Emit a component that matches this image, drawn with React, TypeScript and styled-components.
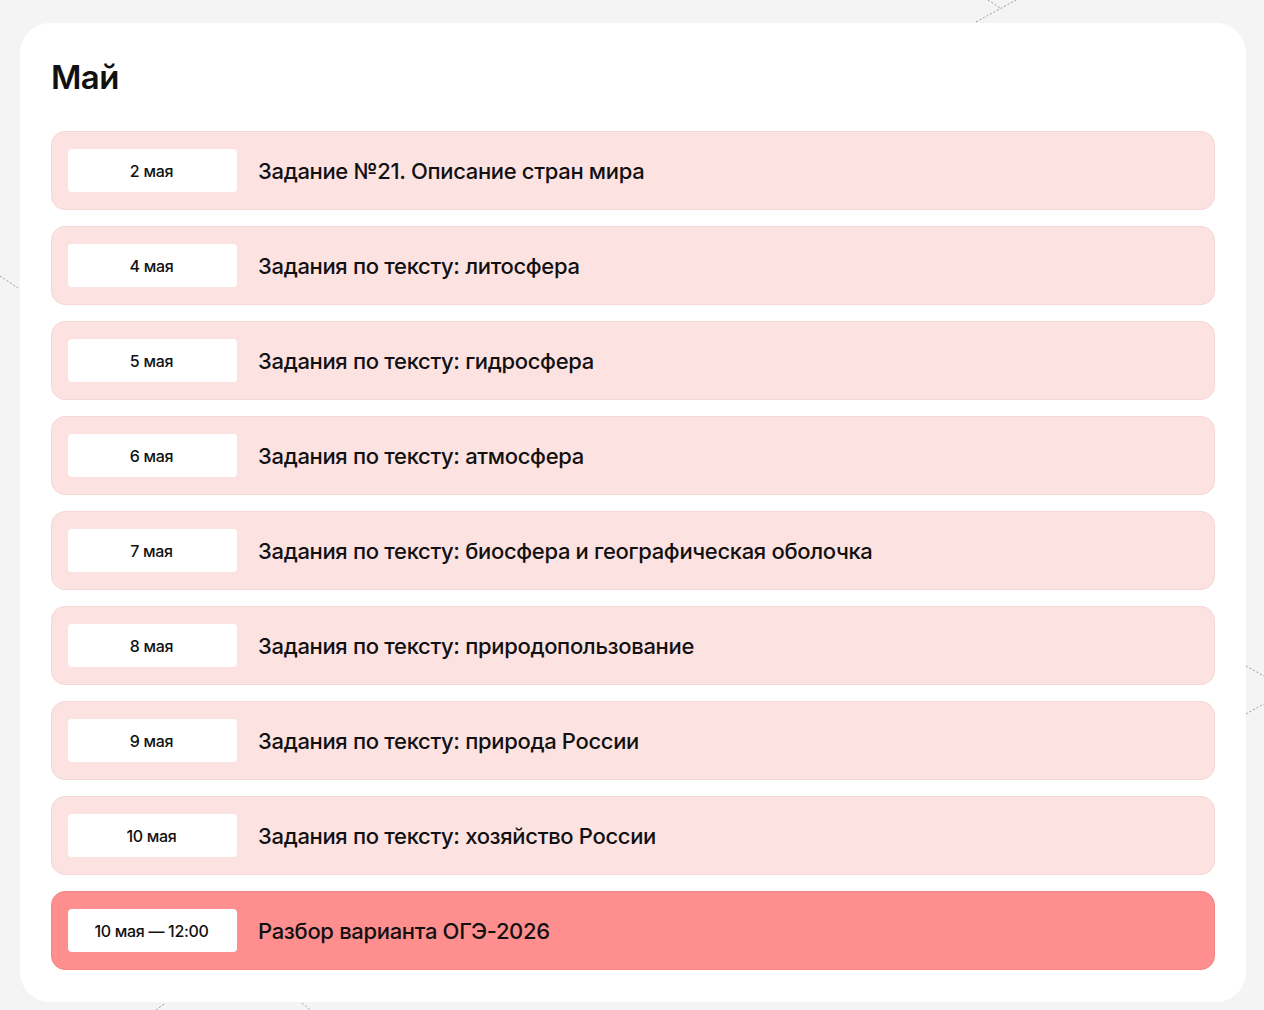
import React from "react";
import styled, { createGlobalStyle } from "styled-components";

const Global = createGlobalStyle`
  html, body { margin: 0; padding: 0; background: #f4f4f4; }
  body { font-family: Inter, "Noto Sans", sans-serif; color: #111; }
  * { box-sizing: border-box; }
`;

const Page = styled.div`
  position: relative;
  min-height: 1010px;
  padding: 23px 18px 7px 20px;
  overflow: hidden;
`;

const Card = styled.section`
  position: relative;
  background: #fff;
  border-radius: 30px;
  padding: 32px 31px 32px 31px;
  display: flex;
  flex-direction: column;
  gap: 32px;
`;

const Title = styled.h2`
  margin: 0;
  font-size: 33px;
  line-height: 44px;
  font-weight: 600;
  letter-spacing: -0.6px;
  color: #111;
`;

const List = styled.div`
  display: flex;
  flex-direction: column;
  gap: 16px;
`;

const Row = styled.div<{ $accent?: boolean }>`
  display: flex;
  align-items: center;
  gap: 21px;
  height: 79px;
  padding: 0 16px;
  border-radius: 14px;
  background: ${(p) => (p.$accent ? "#ff8e8e" : "#fde2e2")};
  border: 1px solid ${(p) => (p.$accent ? "#f48585" : "#f7d6d6")};
`;

const DatePill = styled.div`
  flex: 0 0 169px;
  height: 43px;
  background: #fff;
  border-radius: 4px;
  display: flex;
  align-items: center;
  justify-content: center;
  font-size: 16px;
  font-weight: 500;
  letter-spacing: -0.3px;
  color: #111;
  padding-right: 2px;
`;

const RowTitle = styled.div`
  font-size: 22px;
  font-weight: 500;
  letter-spacing: -0.33px;
  color: #111;
`;

const Deco = styled.svg`
  position: absolute;
  pointer-events: none;
`;

const items: { date: string; title: string; accent?: boolean }[] = [
  { date: "2 мая", title: "Задание №21. Описание стран мира" },
  { date: "4 мая", title: "Задания по тексту: литосфера" },
  { date: "5 мая", title: "Задания по тексту: гидросфера" },
  { date: "6 мая", title: "Задания по тексту: атмосфера" },
  { date: "7 мая", title: "Задания по тексту: биосфера и географическая оболочка" },
  { date: "8 мая", title: "Задания по тексту: природопользование" },
  { date: "9 мая", title: "Задания по тексту: природа России" },
  { date: "10 мая", title: "Задания по тексту: хозяйство России" },
  { date: "10 мая — 12:00", title: "Разбор варианта ОГЭ-2026", accent: true },
];

export default function App() {
  return (
    <>
      <Global />
      <Page>
        <Deco style={{ left: 970, top: 0 }} width="50" height="24" viewBox="0 0 50 24">
          <path d="M6 22 L46 0 M18 0 L30 8" stroke="#999" strokeWidth="1" strokeDasharray="2 2" fill="none" />
        </Deco>
        <Deco style={{ left: 0, top: 272 }} width="20" height="20" viewBox="0 0 20 20">
          <path d="M0 4 L18 16" stroke="#999" strokeWidth="1" strokeDasharray="2 2" fill="none" />
        </Deco>
        <Deco style={{ left: 1246, top: 660 }} width="18" height="56" viewBox="0 0 18 56">
          <path d="M0 6 L18 16 M0 54 L18 44" stroke="#999" strokeWidth="1" strokeDasharray="2 2" fill="none" />
        </Deco>
        <Deco style={{ left: 150, top: 1003 }} width="200" height="7" viewBox="0 0 200 7">
          <path d="M6 7 L14 1 M152 0 L160 7" stroke="#999" strokeWidth="1" strokeDasharray="2 2" fill="none" />
        </Deco>
        <Card>
          <Title>Май</Title>
          <List>
            {items.map((it, i) => (
              <Row key={i} $accent={it.accent}>
                <DatePill>{it.date}</DatePill>
                <RowTitle>{it.title}</RowTitle>
              </Row>
            ))}
          </List>
        </Card>
      </Page>
    </>
  );
}
